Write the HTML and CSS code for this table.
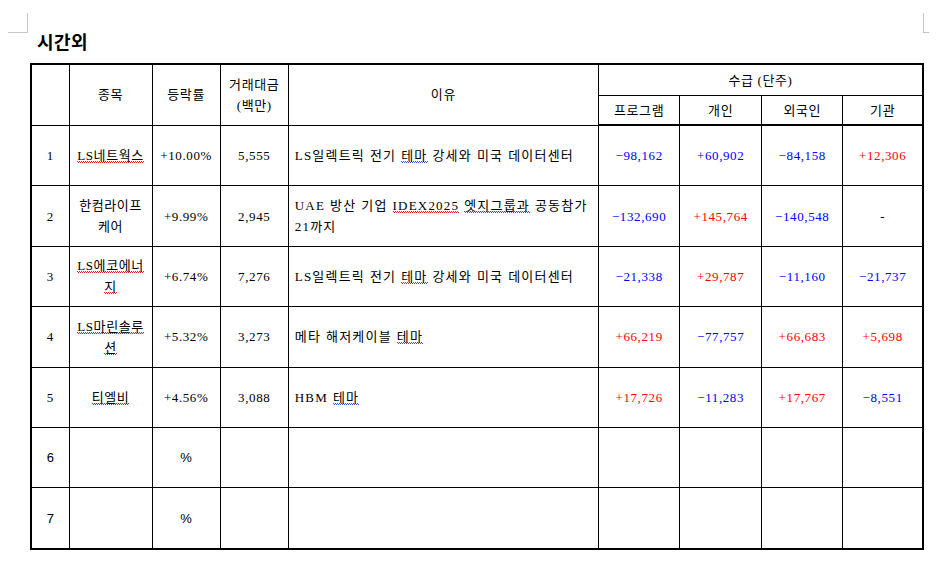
FILE: index.html
```html
<!DOCTYPE html>
<html lang="ko">
<head>
<meta charset="utf-8">
<title>시간외</title>
<link rel="stylesheet" href="styles.css">
</head>
<body>
<div class="page">
  <span class="crop crop-left"></span>
  <span class="crop crop-right"></span>
  <h1 class="title">시간외</h1>
  <table class="grid">
    <colgroup>
      <col class="c-no"><col class="c-name"><col class="c-rate"><col class="c-amt"><col class="c-why">
      <col class="c-q"><col class="c-q2"><col class="c-q"><col class="c-q3">
    </colgroup>
    <thead>
      <tr class="h1">
        <th rowspan="2"></th>
        <th rowspan="2">종목</th>
        <th rowspan="2">등락률</th>
        <th rowspan="2">거래대금<br>(백만)</th>
        <th rowspan="2">이유</th>
        <th colspan="4">수급 (단주)</th>
      </tr>
      <tr class="h2">
        <th>프로그램</th><th>개인</th><th>외국인</th><th>기관</th>
      </tr>
    </thead>
    <tbody>
      <tr>
        <td>1</td>
        <td><span class="sp">LS네트웍스</span></td>
        <td class="num">+10.00%</td>
        <td class="num">5,555</td>
        <td class="why">LS일렉트릭 전기 <span class="gr">테마</span> 강세와 미국 데이터센터</td>
        <td class="num dn">−98,162</td>
        <td class="num dn">+60,902</td>
        <td class="num dn">−84,158</td>
        <td class="num up">+12,306</td>
      </tr>
      <tr>
        <td>2</td>
        <td>한컴라이프<br>케어</td>
        <td class="num">+9.99%</td>
        <td class="num">2,945</td>
        <td class="why">UAE 방산 기업 <span class="sp">IDEX2025</span> <span class="sp">엣지그룹과</span> 공동참가<br>21까지</td>
        <td class="num dn">−132,690</td>
        <td class="num up">+145,764</td>
        <td class="num dn">−140,548</td>
        <td class="num">-</td>
      </tr>
      <tr>
        <td>3</td>
        <td><span class="sp">LS에코에너</span><br><span class="sp">지</span></td>
        <td class="num">+6.74%</td>
        <td class="num">7,276</td>
        <td class="why">LS일렉트릭 전기 <span class="gr">테마</span> 강세와 미국 데이터센터</td>
        <td class="num dn">−21,338</td>
        <td class="num up">+29,787</td>
        <td class="num dn">−11,160</td>
        <td class="num dn">−21,737</td>
      </tr>
      <tr>
        <td>4</td>
        <td><span class="sp">LS마린솔루</span><br><span class="sp">션</span></td>
        <td class="num">+5.32%</td>
        <td class="num">3,273</td>
        <td class="why">메타 해저케이블 <span class="gr">테마</span></td>
        <td class="num up">+66,219</td>
        <td class="num dn">−77,757</td>
        <td class="num up">+66,683</td>
        <td class="num up">+5,698</td>
      </tr>
      <tr>
        <td>5</td>
        <td><span class="sp">티엘비</span></td>
        <td class="num">+4.56%</td>
        <td class="num">3,088</td>
        <td class="why">HBM <span class="gr">테마</span></td>
        <td class="num up">+17,726</td>
        <td class="num dn">−11,283</td>
        <td class="num up">+17,767</td>
        <td class="num dn">−8,551</td>
      </tr>
      <tr class="blank">
        <td>6</td><td></td><td>%</td><td></td><td class="why"></td><td></td><td></td><td></td><td></td>
      </tr>
      <tr class="blank">
        <td>7</td><td></td><td>%</td><td></td><td class="why"></td><td></td><td></td><td></td><td></td>
      </tr>
    </tbody>
  </table>
</div>
</body>
</html>
```

FILE: styles.css
```css
html, body {
  margin: 0;
  padding: 0;
  background: #ffffff;
}

.page {
  position: relative;
  width: 937px;
  height: 565px;
  padding: 28px 0 0 30px;
  box-sizing: border-box;
  font-family: "Liberation Serif", "Noto Sans CJK KR", serif;
  color: #000;
}

.crop {
  position: absolute;
  top: 13px;
  height: 19px;
  border-color: #c6c6c6;
  border-style: solid;
  border-width: 0;
}
.crop-left {
  left: 8px;
  width: 19px;
  border-right-width: 1px;
  border-bottom-width: 1px;
}
.crop-right {
  left: 923px;
  width: 5px;
  border-left-width: 1px;
  border-bottom-width: 1px;
}

.title {
  margin: 0 0 9px 7px;
  font-family: "Noto Sans CJK KR", sans-serif;
  font-size: 18px;
  font-weight: 700;
  line-height: 26px;
  letter-spacing: 0.5px;
}

.grid {
  border-collapse: collapse;
  table-layout: fixed;
  border: 2px solid #000;
  width: 894px;
  font-size: 13px;
  line-height: 21px;
  letter-spacing: 0.6px;
}

.c-no { width: 38px; }
.c-name { width: 83px; }
.c-rate { width: 68px; }
.c-amt { width: 68px; }
.c-why { width: 310px; }
.c-q { width: 81px; }
.c-q2 { width: 82px; }
.c-q3 { width: 80px; }

.grid th,
.grid td {
  border: 1px solid #000;
  padding: 0 2px;
  text-align: center;
  vertical-align: middle;
  font-weight: 400;
}

.grid thead tr.h1 th { height: 30px; }
.grid thead tr.h2 th { height: 28px; border-bottom: 2px solid #000; }

.grid tbody td { height: 59.4px; }

.grid td.why {
  text-align: left;
  padding-left: 6px;
  white-space: nowrap;
  letter-spacing: 1.2px;
  word-spacing: 0.5px;
}

.num { white-space: nowrap; }
.up { color: #ff0000; }
.dn { color: #0000ff; }

.sp,
.gr {
  --sq: #e0201c;
  background-image:
    repeating-linear-gradient(90deg, var(--sq) 0 1px, transparent 1px 2px),
    repeating-linear-gradient(90deg, transparent 0 1px, var(--sq) 1px 2px);
  background-size: 100% 1px, 100% 1px;
  background-position: 0 calc(100% - 1px), 0 100%;
  background-repeat: no-repeat;
}
.gr { --sq: #3a52d8; }

.blank td {
  font-family: "Liberation Sans", "Noto Sans CJK KR", sans-serif;
  letter-spacing: 0;
}
```
